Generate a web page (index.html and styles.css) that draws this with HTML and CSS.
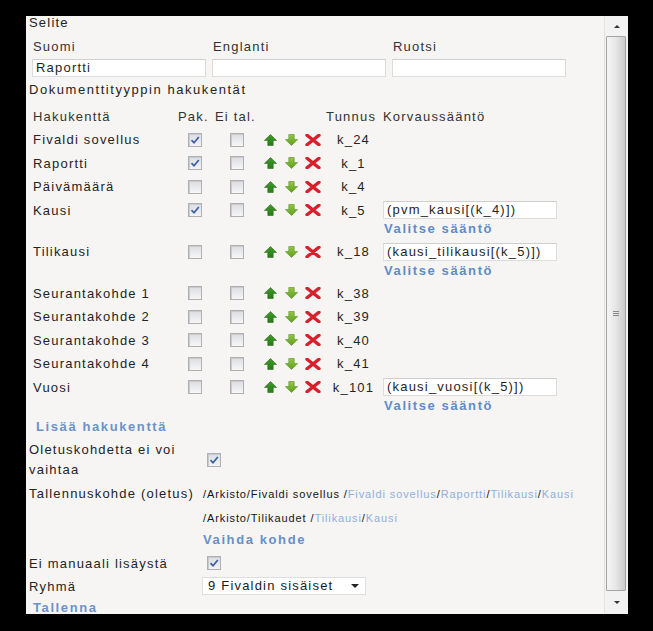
FILE: index.html
```html
<!DOCTYPE html>
<html lang="fi">
<head>
<meta charset="utf-8">
<title>Dokumenttityyppi</title>
<link rel="stylesheet" href="styles.css">
</head>
<body>
<svg class="defs" width="0" height="0" aria-hidden="true">
  <defs>
    <linearGradient id="gUp" x1="0" y1="0" x2="0" y2="1">
      <stop offset="0" stop-color="#3f9a2a"/>
      <stop offset="1" stop-color="#2a7a1a"/>
    </linearGradient>
    <linearGradient id="gDown" x1="0" y1="0" x2="0" y2="1">
      <stop offset="0" stop-color="#93c843"/>
      <stop offset="1" stop-color="#5e9e24"/>
    </linearGradient>
    <symbol id="up" viewBox="0 0 13 12">
      <path d="M6.5 0.5 L12.6 6.4 L9.2 6.4 L9.2 11.5 L3.8 11.5 L3.8 6.4 L0.4 6.4 Z" fill="url(#gUp)" stroke="#2a6e18" stroke-width="0.6" stroke-linejoin="round"/>
    </symbol>
    <symbol id="down" viewBox="0 0 13 12">
      <path d="M3.8 0.5 L9.2 0.5 L9.2 5.6 L12.6 5.6 L6.5 11.5 L0.4 5.6 L3.8 5.6 Z" fill="url(#gDown)" stroke="#5a8e22" stroke-width="0.6" stroke-linejoin="round"/>
    </symbol>
    <symbol id="del" viewBox="0 0 16 12">
      <path d="M2 1.2 L14 10.8 M14 1.2 L2 10.8" stroke="#d8202c" stroke-width="3.3" stroke-linecap="round"/>
    </symbol>
    <symbol id="chk" viewBox="0 0 12 12">
      <path d="M2.5 6.2 L5 8.8 L9.8 3" fill="none" stroke="#3d5f9c" stroke-width="1.7"/>
    </symbol>
  </defs>
</svg>
<div class="frame">
  <div class="window">
    <div class="content">
      <div class="selite">Selite</div>
      <div class="langs">
        <span class="lang-label">Suomi</span>
        <span class="lang-label">Englanti</span>
        <span class="lang-label">Ruotsi</span>
        <span class="field">Raportti</span>
        <span class="field"></span>
        <span class="field"></span>
      </div>
      <div class="section-title">Dokumenttityyppin hakukentät</div>

      <div class="fields">
        <div class="frow head">
          <span class="c-name">Hakukenttä</span>
          <span class="c-h">Pak.</span>
          <span class="c-h">Ei tal.</span>
          <span></span>
          <span class="c-h">Tunnus</span>
          <span class="c-h">Korvaussääntö</span>
        </div>

        <div class="frow">
          <span class="c-name">Fivaldi sovellus</span>
          <span class="c-cb"><span class="cb on"><svg><use href="#chk"/></svg></span></span>
          <span class="c-cb"><span class="cb"></span></span>
          <span class="c-ic"><svg class="i-up"><use href="#up"/></svg><svg class="i-down"><use href="#down"/></svg><svg class="i-del"><use href="#del"/></svg></span>
          <span class="c-id">k_24</span>
          <span class="c-korv"></span>
        </div>
        <div class="frow">
          <span class="c-name">Raportti</span>
          <span class="c-cb"><span class="cb on"><svg><use href="#chk"/></svg></span></span>
          <span class="c-cb"><span class="cb"></span></span>
          <span class="c-ic"><svg class="i-up"><use href="#up"/></svg><svg class="i-down"><use href="#down"/></svg><svg class="i-del"><use href="#del"/></svg></span>
          <span class="c-id">k_1</span>
          <span class="c-korv"></span>
        </div>
        <div class="frow">
          <span class="c-name">Päivämäärä</span>
          <span class="c-cb"><span class="cb"></span></span>
          <span class="c-cb"><span class="cb"></span></span>
          <span class="c-ic"><svg class="i-up"><use href="#up"/></svg><svg class="i-down"><use href="#down"/></svg><svg class="i-del"><use href="#del"/></svg></span>
          <span class="c-id">k_4</span>
          <span class="c-korv"></span>
        </div>
        <div class="frow tall">
          <span class="c-name">Kausi</span>
          <span class="c-cb"><span class="cb on"><svg><use href="#chk"/></svg></span></span>
          <span class="c-cb"><span class="cb"></span></span>
          <span class="c-ic"><svg class="i-up"><use href="#up"/></svg><svg class="i-down"><use href="#down"/></svg><svg class="i-del"><use href="#del"/></svg></span>
          <span class="c-id">k_5</span>
          <span class="c-korv"><span class="korv-line"><span class="field rule">(pvm_kausi[(k_4)])</span></span><span class="link rule-link">Valitse sääntö</span></span>
        </div>
        <div class="frow tall">
          <span class="c-name">Tilikausi</span>
          <span class="c-cb"><span class="cb"></span></span>
          <span class="c-cb"><span class="cb"></span></span>
          <span class="c-ic"><svg class="i-up"><use href="#up"/></svg><svg class="i-down"><use href="#down"/></svg><svg class="i-del"><use href="#del"/></svg></span>
          <span class="c-id">k_18</span>
          <span class="c-korv"><span class="korv-line"><span class="field rule">(kausi_tilikausi[(k_5)])</span></span><span class="link rule-link">Valitse sääntö</span></span>
        </div>
        <div class="frow">
          <span class="c-name">Seurantakohde 1</span>
          <span class="c-cb"><span class="cb"></span></span>
          <span class="c-cb"><span class="cb"></span></span>
          <span class="c-ic"><svg class="i-up"><use href="#up"/></svg><svg class="i-down"><use href="#down"/></svg><svg class="i-del"><use href="#del"/></svg></span>
          <span class="c-id">k_38</span>
          <span class="c-korv"></span>
        </div>
        <div class="frow">
          <span class="c-name">Seurantakohde 2</span>
          <span class="c-cb"><span class="cb"></span></span>
          <span class="c-cb"><span class="cb"></span></span>
          <span class="c-ic"><svg class="i-up"><use href="#up"/></svg><svg class="i-down"><use href="#down"/></svg><svg class="i-del"><use href="#del"/></svg></span>
          <span class="c-id">k_39</span>
          <span class="c-korv"></span>
        </div>
        <div class="frow">
          <span class="c-name">Seurantakohde 3</span>
          <span class="c-cb"><span class="cb"></span></span>
          <span class="c-cb"><span class="cb"></span></span>
          <span class="c-ic"><svg class="i-up"><use href="#up"/></svg><svg class="i-down"><use href="#down"/></svg><svg class="i-del"><use href="#del"/></svg></span>
          <span class="c-id">k_40</span>
          <span class="c-korv"></span>
        </div>
        <div class="frow">
          <span class="c-name">Seurantakohde 4</span>
          <span class="c-cb"><span class="cb"></span></span>
          <span class="c-cb"><span class="cb"></span></span>
          <span class="c-ic"><svg class="i-up"><use href="#up"/></svg><svg class="i-down"><use href="#down"/></svg><svg class="i-del"><use href="#del"/></svg></span>
          <span class="c-id">k_41</span>
          <span class="c-korv"></span>
        </div>
        <div class="frow tall">
          <span class="c-name">Vuosi</span>
          <span class="c-cb"><span class="cb"></span></span>
          <span class="c-cb"><span class="cb"></span></span>
          <span class="c-ic"><svg class="i-up"><use href="#up"/></svg><svg class="i-down"><use href="#down"/></svg><svg class="i-del"><use href="#del"/></svg></span>
          <span class="c-id">k_101</span>
          <span class="c-korv"><span class="korv-line"><span class="field rule">(kausi_vuosi[(k_5)])</span></span><span class="link rule-link">Valitse sääntö</span></span>
        </div>
      </div>

      <div class="link add">Lisää hakukenttä</div>

      <div class="props">
        <div class="p-label two">Oletuskohdetta ei voi<br>vaihtaa</div>
        <div class="p-val mid"><span class="cb on"><svg><use href="#chk"/></svg></span></div>

        <div class="p-label path-label">Tallennuskohde (oletus)</div>
        <div class="p-val">
          <div class="path">/Arkisto/Fivaldi sovellus /<span class="plink">Fivaldi sovellus</span>/<span class="plink">Raportti</span>/<span class="plink">Tilikausi</span>/<span class="plink">Kausi</span></div>
          <div class="path">/Arkisto/Tilikaudet /<span class="plink">Tilikausi</span>/<span class="plink">Kausi</span></div>
          <div class="link change">Vaihda kohde</div>
        </div>

        <div class="p-label row23">Ei manuaali lisäystä</div>
        <div class="p-val row23 mid"><span class="cb on"><svg><use href="#chk"/></svg></span></div>

        <div class="p-label row23">Ryhmä</div>
        <div class="p-val row23 mid">
          <span class="select">9 Fivaldin sisäiset<span class="caret"></span></span>
        </div>
      </div>

      <div class="link save">Tallenna</div>
    </div>

    <div class="scrollbar">
      <div class="sb-btn"><span class="tri-up"></span></div>
      <div class="sb-track">
        <div class="sb-thumb"><span class="grip"></span></div>
      </div>
      <div class="sb-btn"><span class="tri-down"></span></div>
    </div>
  </div>
</div>
</body>
</html>
```
FILE: styles.css
```css
* { box-sizing: border-box; }

html, body {
  margin: 0;
  padding: 0;
  background: #000;
}

body {
  font-family: "Liberation Sans", Arial, sans-serif;
  font-size: 13px;
  letter-spacing: 1.2px;
  color: #242424;
}

.defs { position: absolute; width: 0; height: 0; overflow: hidden; }

.frame {
  padding: 16px 0 0 26px;
  height: 631px;
}

.window {
  width: 602px;
  height: 598px;
  display: flex;
  background: #f7f5f3;
}

.content {
  width: 578px;
  height: 598px;
  overflow: hidden;
  background: #f7f5f3;
}

.selite {
  line-height: 14px;
  padding-left: 3px;
}

.langs {
  display: grid;
  grid-template-columns: 180px 180px 180px;
  grid-template-rows: 16px 18px;
  row-gap: 4px;
  margin-top: 9px;
  padding-left: 6px;
}

.lang-label {
  line-height: 16px;
  padding-left: 1px;
  color: #333;
}

.field {
  display: block;
  width: 174px;
  height: 18px;
  background: #fff;
  border: 1px solid #dcdcdc;
  border-top-color: #cfcfcf;
  line-height: 16px;
  padding-left: 3px;
  color: #1f1f1f;
  white-space: nowrap;
  overflow: hidden;
}

.section-title {
  margin-top: 5px;
  line-height: 16px;
  padding-left: 3px;
  letter-spacing: 1.55px;
}

.fields {
  margin-top: 7px;
}

.frow {
  display: grid;
  grid-template-columns: 143px 38px 46px 66px 57px 1fr;
  padding-left: 7px;
  height: 23.5px;
  align-items: start;
}

.frow.head { height: 23px; }
.frow.tall { height: 41.5px; }

.frow > span {
  height: 23.5px;
  display: flex;
  align-items: center;
  white-space: nowrap;
}

.frow.head > span { height: 23px; color: #333; }

.c-h { padding-left: 2px; }
.frow.head .c-h:nth-child(3) { padding-left: 1px; }
.frow.head .c-h:nth-child(5) { padding-left: 0; }
.frow.head .c-h:nth-child(6) { padding-left: 0; }

.c-cb { justify-content: center; }

.c-ic { padding-left: 4px; }
.c-ic svg { display: block; flex: none; }
.i-up { width: 13px; height: 12px; }
.i-down { width: 13px; height: 12px; margin-left: 8px; }
.i-del { width: 16px; height: 12px; margin-left: 7px; }

.c-id { justify-content: center; padding-right: 2px; }

.frow > .c-korv {
  display: block;
  height: auto;
}

.korv-line {
  height: 23.5px;
  display: flex;
  align-items: center;
}

.field.rule {
  padding-left: 3px;
}

.rule-link {
  display: block;
  line-height: 13px;
  padding-left: 1px;
}

.cb {
  display: block;
  width: 14px;
  height: 14px;
  border: 1px solid #aeb0b4;
  background: linear-gradient(#dcdde0, #f6f6f7);
  box-shadow: inset 1px 1px 0 #c9cacd;
}

.cb.on {
  background: linear-gradient(#d9dde6, #f1f3f7);
}

.cb svg {
  display: block;
  width: 12px;
  height: 12px;
}

.link {
  color: #5f8cc6;
  font-weight: bold;
  letter-spacing: 1.6px;
}

.add {
  margin-top: 0.5px;
  line-height: 18px;
  padding-left: 10px;
  color: #6a93c9;
}

.props {
  display: grid;
  grid-template-columns: 174px 1fr;
  padding-left: 3px;
  margin-top: 4px;
}

.p-label { white-space: nowrap; }

.p-label.two {
  line-height: 20px;
}

.p-val.mid {
  display: flex;
  align-items: center;
}

.p-val .cb { margin-left: 4px; }

.path-label {
  margin-top: 2px;
  line-height: 24px;
}

.props > .p-val:nth-child(4) { margin-top: 2px; }

.path {
  font-size: 11px;
  letter-spacing: 0.9px;
  line-height: 24px;
  color: #141414;
  white-space: nowrap;
}

.plink { color: #8cb0df; }

.change {
  line-height: 20px;
  color: #6590c8;
}

.row23 {
  height: 23px;
  line-height: 23px;
}

.props > .p-label.row23:nth-child(5),
.props > .p-val.row23:nth-child(6) { margin-top: 2px; }

.select {
  display: flex;
  align-items: center;
  width: 164px;
  height: 18px;
  margin-left: -1px;
  background: #fff;
  border: 1px solid #dedede;
  padding-left: 5px;
  line-height: 16px;
  color: #1a1a1a;
}

.caret {
  margin-left: auto;
  margin-right: 6px;
  width: 0;
  height: 0;
  border-left: 4px solid transparent;
  border-right: 4px solid transparent;
  border-top: 4px solid #222;
}

.save {
  margin-top: 1px;
  line-height: 18px;
  padding-left: 7px;
  color: #6a93c9;
}

/* scrollbar */
.scrollbar {
  width: 24px;
  height: 598px;
  display: flex;
  flex-direction: column;
  background: #f2f2f2;
  border-left: 1px solid #e2e2e2;
}

.sb-btn {
  height: 20px;
  display: flex;
  align-items: center;
  justify-content: center;
  flex: none;
}

.sb-btn:last-child { height: 23px; }

.tri-up {
  width: 0; height: 0;
  border-left: 3px solid transparent;
  border-right: 3px solid transparent;
  border-bottom: 3px solid #333;
}

.tri-down {
  width: 0; height: 0;
  border-left: 3px solid transparent;
  border-right: 3px solid transparent;
  border-top: 3px solid #333;
}

.sb-track {
  flex: 1;
  padding: 0 2px 0 1px;
  display: flex;
}

.sb-thumb {
  flex: 1;
  border: 1px solid #a4a4a4;
  border-radius: 1px;
  background: linear-gradient(90deg, #f4f4f4 0%, #e8e8e8 45%, #cbcbcb 100%);
  display: flex;
  align-items: center;
  justify-content: center;
}

.grip {
  width: 6px;
  height: 5px;
  border-top: 1px solid #8a8a8a;
  border-bottom: 1px solid #8a8a8a;
  background: linear-gradient(#fff0 40%, #8a8a8a 40%, #8a8a8a 60%, #fff0 60%);
}
```
